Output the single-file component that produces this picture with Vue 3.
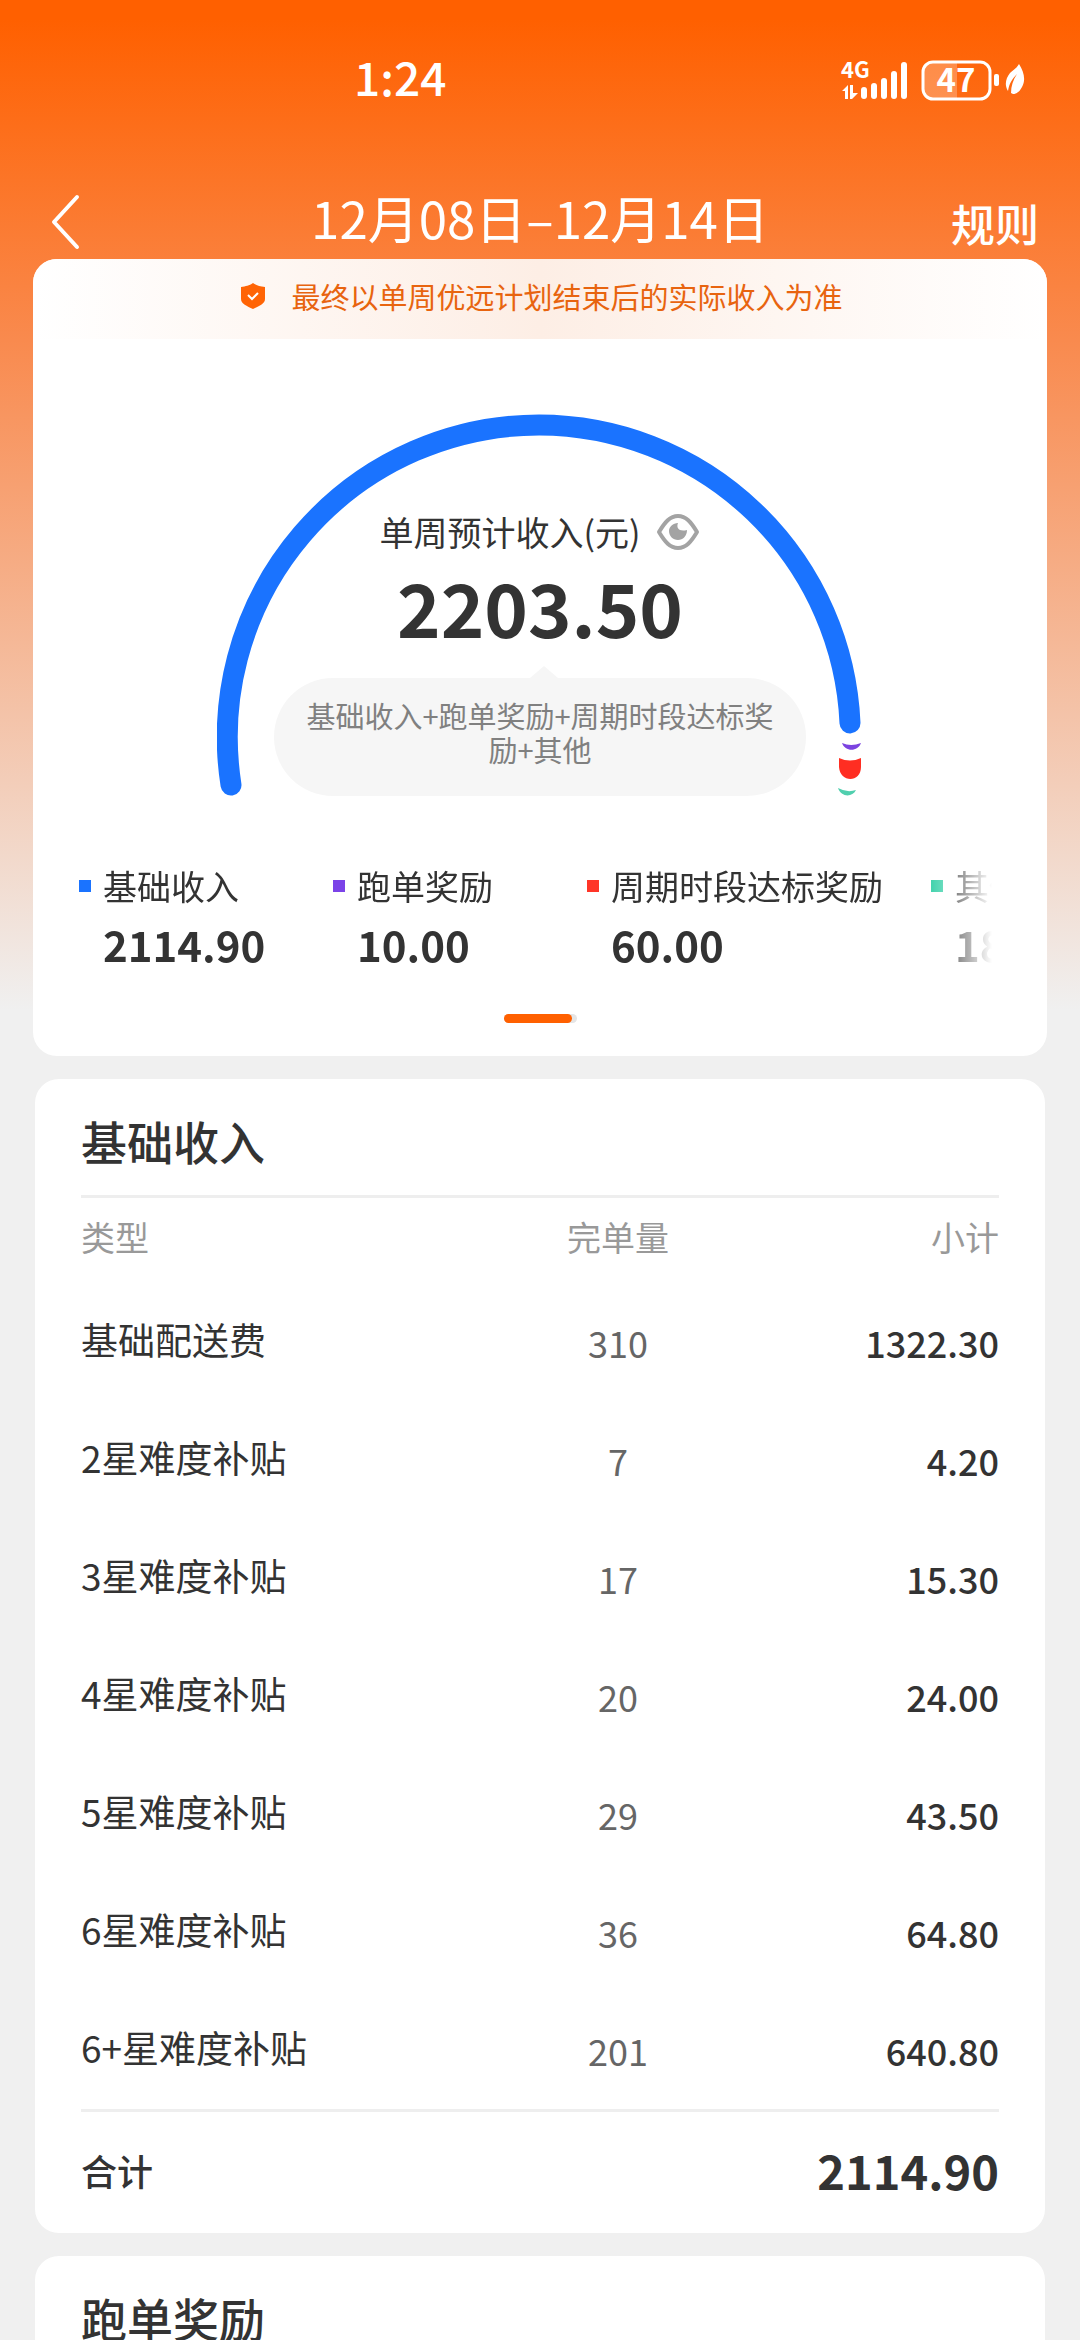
<script setup>
const legend = [
  { name: '基础收入', value: '2114.90', tone: 'blue' },
  { name: '跑单奖励', value: '10.00', tone: 'purple' },
  { name: '周期时段达标奖励', value: '60.00', tone: 'red' },
  { name: '其他', value: '18.60', tone: 'green' },
]

const rows = [
  { type: '基础配送费', count: '310', amount: '1322.30' },
  { type: '2星难度补贴', count: '7', amount: '4.20' },
  { type: '3星难度补贴', count: '17', amount: '15.30' },
  { type: '4星难度补贴', count: '20', amount: '24.00' },
  { type: '5星难度补贴', count: '29', amount: '43.50' },
  { type: '6星难度补贴', count: '36', amount: '64.80' },
  { type: '6+星难度补贴', count: '201', amount: '640.80' },
]
</script>

<template>
  <div class="page">
    <div class="status">
      <span class="clock">1:24</span>
      <svg class="indicators" width="190" height="48" viewBox="0 0 190 48" fill="#fff">
        <text class="network" x="1" y="24">4G</text>
        <path d="M2 37l6-6v14H5v-8zM10 31h3v8h5l-6 6h-2z" />
        <rect x="21" y="33" width="6" height="12" rx="3" />
        <rect x="31" y="29" width="6" height="16" rx="3" />
        <rect x="41" y="24" width="6" height="21" rx="3" />
        <rect x="51" y="17" width="6" height="28" rx="3" />
        <rect x="61" y="8" width="6" height="37" rx="3" />
        <path d="M92 8h25v37H92a9 9 0 0 1-9-9V17a9 9 0 0 1 9-9z" fill-opacity=".26" />
        <rect x="83" y="8" width="67" height="37" rx="10" fill="none" stroke="#fff" stroke-width="3" />
        <rect x="154" y="20" width="5" height="12" rx="2" />
        <text class="charge" x="116" y="38" text-anchor="middle">47</text>
        <path d="M179 10c5 8 7 16 3 23-2 4-5 7-9 7l-2-1c0-7 2-13 6-19-5 5-8 10-9 17-4-6-2-13 2-18 3-3 7-5 9-9z" />
      </svg>
    </div>

    <header class="nav">
      <button class="back" type="button" aria-label="返回">
        <svg width="30" height="56" viewBox="0 0 30 56" fill="none" stroke="#fff" stroke-width="4" stroke-linecap="round" stroke-linejoin="round">
          <path d="M26 3L3 28l23 25" />
        </svg>
      </button>
      <h1>12月08日–12月14日</h1>
      <a class="rules" href="#rules">规则</a>
    </header>

    <section class="card summary">
      <p class="notice">
        <svg width="24" height="26" viewBox="0 0 24 26">
          <path d="M12 0c4 3 7 3 12 4v12c0 5-6 7-12 10C6 23 0 21 0 16V4c5-1 8-1 12-4z" fill="#ff6405" />
          <path d="M7 12l4 4 6-6" fill="none" stroke="#fff" stroke-width="2" />
        </svg>
        <span>最终以单周优远计划结束后的实际收入为准</span>
      </p>

      <div class="gauge">
        <svg class="arc" width="646" height="386" viewBox="0 0 646 386">
          <path d="M14 373A312 312 0 0 1 322 13A312 312 0 0 1 633 311" fill="none" stroke="#1a73ff" stroke-width="21" stroke-linecap="round" />
          <path d="M625 331q9 4 19 0c-3 9-16 9-19 0z" fill="#7b43e0" />
          <path d="M622 346q11 5 22 0v9c0 16-21 16-22 0z" fill="#ff2e22" />
          <path d="M621 376q9 5 18 2c-4 8-15 7-18-2z" fill="#50cfae" />
        </svg>
        <div class="readout">
          <div class="caption">
            <span>单周预计收入(元)</span>
            <button class="eye" type="button" aria-label="隐藏金额">
              <svg width="44" height="38" viewBox="0 0 44 38">
                <path d="M3 19C9 9 14 3 22 3s13 6 19 16c-6 10-11 16-19 16S9 29 3 19z" fill="none" stroke="#a3a3a3" stroke-width="4" stroke-linejoin="round" />
                <path d="M22 10c-2 5 1 9 9 7 0 6-4 10-9 10s-9-4-9-9c0-4 4-8 9-8z" fill="#a3a3a3" />
              </svg>
            </button>
          </div>
          <strong class="income">2203.50</strong>
          <p class="formula">基础收入+跑单奖励+周期时段达标奖励+其他</p>
        </div>
      </div>

      <ul class="legend">
        <li v-for="item in legend" :key="item.name">
          <span class="label"><i :class="item.tone"></i>{{ item.name }}</span>
          <strong>{{ item.value }}</strong>
        </li>
      </ul>
      <div class="scroller"><span></span></div>
    </section>

    <section class="card detail">
      <h2>基础收入</h2>
      <table>
        <thead>
          <tr><th>类型</th><th>完单量</th><th>小计</th></tr>
        </thead>
        <tbody>
          <tr v-for="row in rows" :key="row.type">
            <td>{{ row.type }}</td>
            <td>{{ row.count }}</td>
            <td>{{ row.amount }}</td>
          </tr>
        </tbody>
      </table>
      <div class="total"><span>合计</span><strong>2114.90</strong></div>
    </section>

    <section class="card detail">
      <h2>跑单奖励</h2>
    </section>
  </div>
</template>

<style>
body {
  margin: 0;
}
</style>

<style scoped>
.page {
  box-sizing: border-box;
  height: 100vh;
  overflow: hidden;
  background: linear-gradient(#ff6000 0, #ff6000 20px, #f98a4e 340px, #f0f0f0 1010px) #f0f0f0;
  color: #333;
  font-family: "Noto Sans CJK SC", sans-serif;
}
h1, h2, p, ul {
  margin: 0;
  padding: 0;
  font-weight: 500;
}
button {
  padding: 0;
  border: 0;
  background: none;
}
svg {
  display: block;
}
.status {
  display: flex;
  justify-content: space-between;
  align-items: center;
  height: 156px;
  padding: 0 50px 0 354px;
  color: #fff;
}
.indicators {
  overflow: visible;
}
.clock {
  margin-top: -4px;
  font-size: 46px;
  font-weight: 500;
}
.network {
  font-size: 22px;
  font-weight: 700;
}
.charge {
  font-size: 33px;
  font-weight: 700;
}
.nav {
  display: grid;
  grid-template-columns: 1fr auto 1fr;
  align-items: center;
  height: 103px;
  padding: 0 41px;
  color: #fff;
}
.back {
  justify-self: start;
  margin-top: 28px;
  margin-left: 10px;
}
.nav h1 {
  margin-top: 18px;
  font-size: 51px;
  font-weight: 400;
  line-height: 60px;
}
.rules {
  justify-self: end;
  margin-top: 30px;
  color: #fff;
  font-size: 44px;
  font-weight: 500;
  line-height: 60px;
  text-decoration: none;
}
.card {
  border-radius: 24px;
  background: #fff;
}
.summary {
  height: 797px;
  margin: 0 33px;
  overflow: hidden;
}
.notice {
  display: flex;
  box-sizing: border-box;
  justify-content: center;
  align-items: center;
  gap: 26px;
  height: 80px;
  padding: 0 0 6px 4px;
  background: linear-gradient(90deg, #fff, #fdeee5, #fff);
  color: #e8640f;
  font-size: 29px;
  font-weight: 400;
}
.gauge {
  display: grid;
  justify-items: center;
  margin-top: 73px;
}
.arc, .readout {
  grid-area: 1 / 1;
}
.readout {
  display: flex;
  flex-direction: column;
  align-items: center;
  padding-top: 96px;
}
.caption {
  display: flex;
  align-items: center;
  gap: 16px;
  font-size: 34px;
  line-height: 48px;
}
.income {
  margin-top: 8px;
  font-size: 74px;
  line-height: 84px;
}
.formula {
  position: relative;
  box-sizing: border-box;
  width: 532px;
  margin-top: 30px;
  padding: 20px 32px 30px;
  border-radius: 59px;
  background: #f6f6f6;
  color: #808080;
  font-size: 29px;
  font-weight: 400;
  line-height: 34px;
  text-align: center;
}
.formula::before {
  content: "";
  position: absolute;
  bottom: 100%;
  left: 50%;
  border: 14px solid transparent;
  border-top: 0;
  border-bottom: 12px solid #f6f6f6;
  margin-left: -10px;
}
.legend {
  display: flex;
  gap: 48px;
  margin: 60px 55px 0 46px;
  padding-bottom: 12px;
  overflow: hidden;
  list-style: none;
  -webkit-mask-image: linear-gradient(90deg, #000 calc(100% - 60px), transparent);
  mask-image: linear-gradient(90deg, #000 calc(100% - 60px), transparent);
}
.legend li {
  flex: none;
  min-width: 206px;
}
.label {
  display: flex;
  align-items: center;
  gap: 12px;
  font-size: 34px;
  font-weight: 400;
  line-height: 56px;
}
.label i {
  width: 12px;
  height: 12px;
}
.blue { background: #1a73ff; }
.purple { background: #7b43e8; }
.red { background: #ff3528; }
.green { background: #46d3ae; }
.legend strong {
  display: block;
  margin-left: 24px;
  font-size: 42px;
  line-height: 60px;
}
.scroller {
  width: 73px;
  height: 9px;
  margin: 28px auto 0;
  border-radius: 5px;
  background: #e5e5e5;
}
.scroller span {
  display: block;
  width: 68px;
  height: 9px;
  border-radius: 5px;
  background: #ff6000;
}
.detail {
  margin: 23px 35px 0;
  padding: 0 46px;
}
.detail h2 {
  padding: 31px 0 25px;
  font-size: 46px;
  line-height: 60px;
}
table {
  width: 100%;
  border-top: 3px solid #eee;
  border-bottom: 3px solid #eee;
  border-collapse: separate;
  border-spacing: 0;
  table-layout: fixed;
}
th, td {
  box-sizing: border-box;
  padding: 0;
  text-align: right;
}
th {
  height: 85px;
  padding-bottom: 9px;
  color: #999;
  font-size: 34px;
  font-weight: 400;
}
td {
  height: 118px;
  font-size: 36px;
  font-weight: 500;
}
th:first-child, td:first-child {
  width: 45%;
  font-weight: 400;
  text-align: left;
}
td:first-child {
  padding-bottom: 6px;
  font-size: 37px;
}
th:nth-child(2), td:nth-child(2) {
  width: 27%;
  text-align: center;
}
td:nth-child(2) {
  color: #666;
  font-weight: 400;
}
.total {
  display: flex;
  box-sizing: border-box;
  justify-content: space-between;
  align-items: center;
  height: 121px;
  padding-bottom: 6px;
  font-size: 36px;
  font-weight: 500;
}
.total strong {
  font-size: 47px;
}
</style>
